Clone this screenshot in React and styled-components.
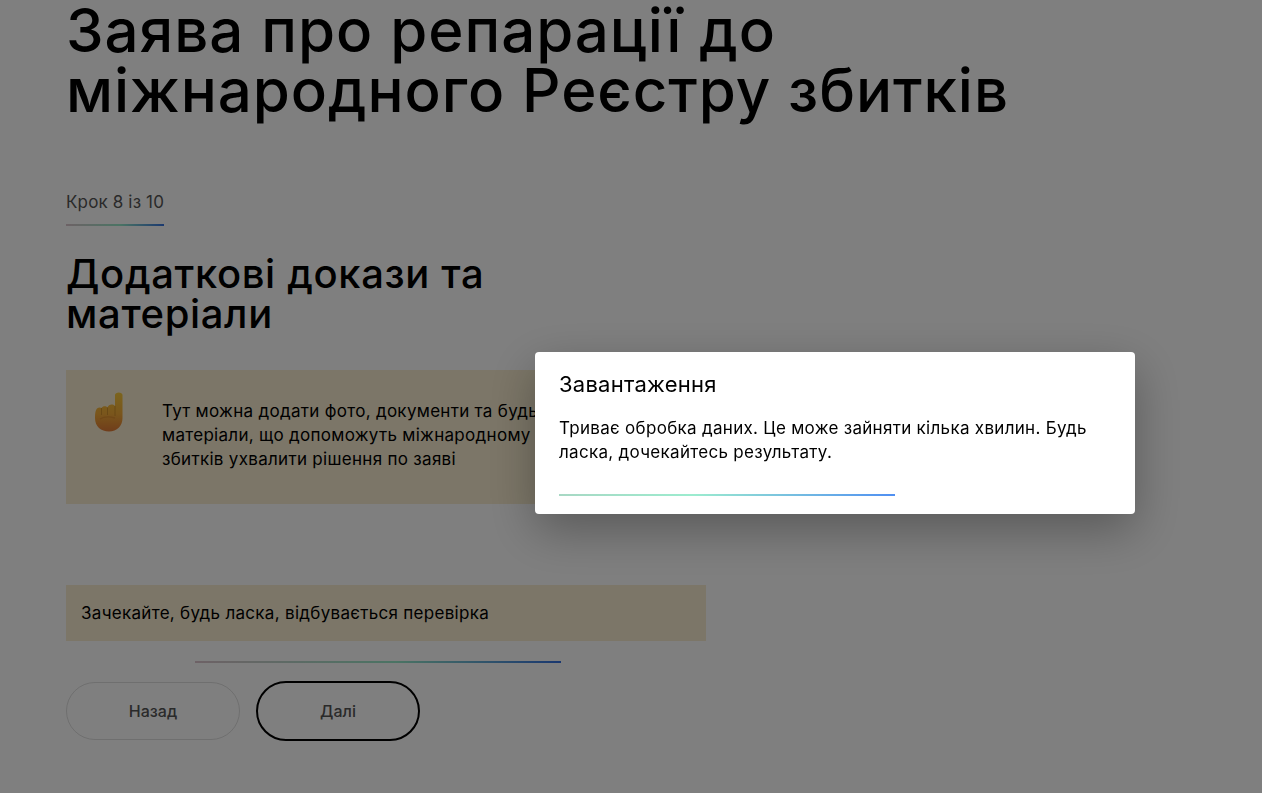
import React from 'react'
import styled, { createGlobalStyle } from 'styled-components'

const Global = createGlobalStyle`
  html, body { margin: 0; padding: 0; height: 100%; overflow: hidden; background: #fff; }
  body { font-family: Inter, "Noto Sans", "Liberation Sans", sans-serif; color: #000; }
`

const barGradient = 'linear-gradient(90deg, #dcc4cc 0%, #96e8c8 55%, #3470e0 100%)'

const Page = styled.main`
  width: 640px;
  padding: 0 0 0 66px;
`

const Title = styled.h1`
  width: 1100px;
  margin: 0 0 70px;
  font-size: 60px;
  font-weight: 450;
  line-height: 60px;
  letter-spacing: 0.95px;
`

const Step = styled.div`
  display: inline-block;
  padding-bottom: 10px;
  font-size: 17px;
  line-height: 24px;
  letter-spacing: 0.15px;
  color: #555;
  border-bottom: 2px solid;
  border-image: ${barGradient} 1;
`

const Heading = styled.h2`
  width: 480px;
  margin: 28px 0 36px;
  font-size: 40px;
  font-weight: 450;
  line-height: 40px;
  letter-spacing: 0.65px;
`

const Note = styled.section`
  display: flex;
  height: 134px;
  box-sizing: border-box;
  padding: 22px 24px 22px 29px;
  gap: 39px;
  background: #f9edd0;
`

const NoteIcon = styled.svg`
  flex: none;
  width: 28px;
  height: 40px;
`

const NoteText = styled.p`
  max-width: 480px;
  margin: 7px 0 0;
  font-size: 17px;
  line-height: 24px;
  letter-spacing: 0.3px;
`

const Status = styled.div`
  margin-top: 81px;
  padding: 16px 15px;
  background: #f9edd0;
  font-size: 17px;
  line-height: 24px;
  letter-spacing: 0.3px;
`

const Progress = styled.div`
  width: 366px;
  height: 2px;
  margin: 20px 0 18px 129px;
  background: ${barGradient};
`

const Actions = styled.div`
  display: flex;
  align-items: center;
  gap: 16px;
`

const Button = styled.button`
  width: ${p => p.$w}px;
  height: ${p => p.$h}px;
  border: ${p => (p.$primary ? '2px solid #000' : '1px solid #dedede')};
  border-radius: 30px;
  background: transparent;
  font-family: inherit;
  font-size: 16px;
  font-weight: 500;
  color: #555;
`

const Overlay = styled.div`
  position: fixed;
  inset: 0;
  background: rgba(0, 0, 0, 0.5);
`

const Modal = styled.div`
  position: absolute;
  left: 535px;
  top: 352px;
  width: 600px;
  height: 162px;
  box-sizing: border-box;
  padding: 19px 24px 0;
  background: #fff;
  border-radius: 4px;
  box-shadow: 0 16px 48px rgba(0, 0, 0, 0.3);
`

const ModalTitle = styled.h3`
  margin: 0 0 19px;
  font-size: 22px;
  font-weight: 400;
  line-height: 26px;
  letter-spacing: 0.25px;
`

const ModalText = styled.p`
  margin: 0 0 30px;
  font-size: 17px;
  line-height: 24px;
  letter-spacing: 0.3px;
`

const ModalBar = styled.div`
  width: 336px;
  height: 2px;
  background: linear-gradient(90deg, #a8d8c4 0%, #9ceccf 40%, #4f8ff2 100%);
`

function PointingHand() {
  return (
    <NoteIcon viewBox="0 0 28 40">
      <defs>
        <linearGradient id="skin" x1="0" y1="0" x2="0" y2="1">
          <stop offset="0" stopColor="#f7c93c" />
          <stop offset="0.55" stopColor="#f4ac38" />
          <stop offset="1" stopColor="#e07a36" />
        </linearGradient>
      </defs>
      <path
        d="M20 3C20 -0.5 27.5 -0.5 27.5 3V26C27.5 34 22 39.5 14 39.5C6 39.5 0 34.5 0 26C0 21 0.5 18 2 16.5C3.5 15.2 5.5 15.2 6.5 16C7.5 14 11 13.5 12.5 15.5C13.5 12.5 17.5 11.5 20 14Z"
        fill="url(#skin)"
      />
      <path d="M6.5 16V23M12.5 15.5V23M20 14V24" stroke="#c98a2a" strokeWidth="0.8" fill="none" />
      <path d="M5 27C9 24.5 15 24.5 20 26" stroke="#e0902f" strokeWidth="1.4" fill="none" />
    </NoteIcon>
  )
}

export default function App() {
  return (
    <>
      <Global />
      <Page>
        <Title>
          Заява про репарації до
          <br />
          міжнародного Реєстру збитків
        </Title>
        <Step>Крок 8 із 10</Step>
        <Heading>Додаткові докази та матеріали</Heading>
        <Note>
          <PointingHand />
          <NoteText>
            Тут можна додати фото, документи та будь-які інші матеріали, що допоможуть міжнародному Реєстру
            збитків ухвалити рішення по заяві
          </NoteText>
        </Note>
        <Status>Зачекайте, будь ласка, відбувається перевірка</Status>
        <Progress />
        <Actions>
          <Button $w={174} $h={58}>Назад</Button>
          <Button $w={164} $h={60} $primary>Далі</Button>
        </Actions>
      </Page>
      <Overlay>
        <Modal>
          <ModalTitle>Завантаження</ModalTitle>
          <ModalText>
            Триває обробка даних. Це може зайняти кілька хвилин. Будь ласка, дочекайтесь результату.
          </ModalText>
          <ModalBar />
        </Modal>
      </Overlay>
    </>
  )
}
